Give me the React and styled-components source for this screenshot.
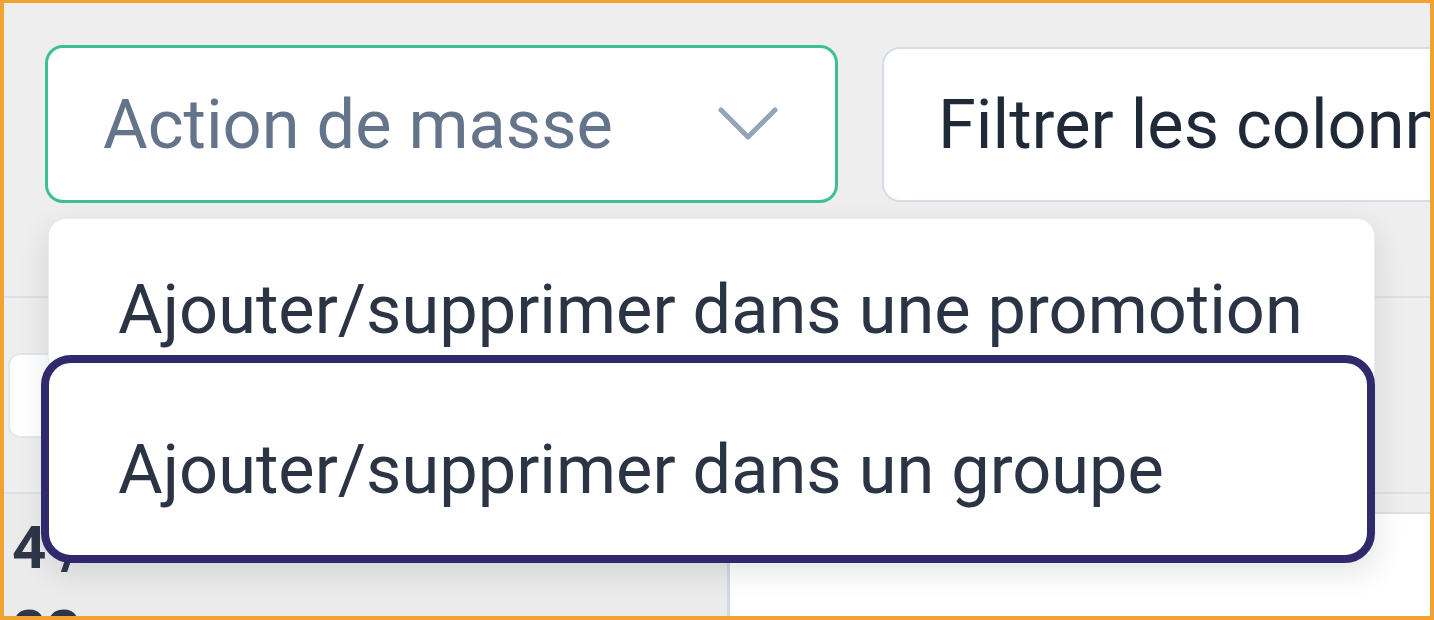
import React from "react";
import styled, { createGlobalStyle } from "styled-components";

const GlobalStyle = createGlobalStyle`
  html, body {
    margin: 0;
    padding: 0;
    background: #ffffff;
  }
  * {
    box-sizing: border-box;
  }
`;

const Frame = styled.div`
  position: relative;
  width: 1434px;
  height: 620px;
  overflow: hidden;
  border: 4px solid #f0a232;
  border-top-width: 3px;
  background: #eeeeee;
  font-family: Roboto, "Liberation Sans", sans-serif;
`;

const Toolbar = styled.div`
  display: flex;
  align-items: center;
  gap: 44px;
  padding: 42px 0 0 41px;
`;

const Select = styled.div`
  flex-shrink: 0;
  display: flex;
  align-items: center;
  justify-content: space-between;
  width: 793px;
  height: 158px;
  padding: 0 56px 0 55px;
  background: #ffffff;
  border: 3px solid #3cc08e;
  border-radius: 18px;
  font-size: 68.5px;
  color: #64748b;
`;

const FilterInput = styled.div`
  flex-shrink: 0;
  display: flex;
  align-items: center;
  width: 700px;
  height: 155px;
  padding-left: 54px;
  background: #ffffff;
  border: 2px solid #d6dde6;
  border-radius: 18px;
  font-size: 68.5px;
  color: #1f2937;
  white-space: nowrap;
`;

const Table = styled.div`
  margin-top: 13px;
`;

const HeadRow = styled.div`
  display: flex;
  align-items: center;
  height: ${(p) => p.h}px;
  border-bottom: 2px solid #dde1e7;
  padding-left: 4px;
`;

const CellInput = styled.div`
  width: 200px;
  height: 85px;
  background: #ffffff;
  border: 2px solid #e2e7ee;
  border-radius: 12px;
`;

const BodyRow = styled.div`
  display: grid;
  grid-template-columns: 726px 1fr;
`;

const LeftCell = styled.div`
  height: 140px;
  padding: 12px 8px;
  background: #ebebeb;
  border-right: 3px solid #d3d9e2;
  font-size: 60px;
  font-weight: 700;
  line-height: 84px;
  color: #2d3748;
`;

const RightCell = styled.div`
  margin-top: 18px;
  background: #ffffff;
  border-top: 2px solid #dde1e7;
`;

const Menu = styled.div`
  position: absolute;
  left: 44px;
  top: 215px;
  width: 1327px;
  padding: 11px 0 8px;
  background: #ffffff;
  border: 1px solid #e8ecf1;
  border-radius: 18px;
  box-shadow: 0 12px 30px rgba(15, 23, 42, 0.12);
`;

const Item = styled.div`
  position: relative;
  height: 160px;
  padding-left: 69px;
  font-size: 68.5px;
  line-height: 160px;
  color: #2b3445;
  white-space: nowrap;

  ${(p) =>
    p.$active &&
    `
    &::after {
      content: "";
      position: absolute;
      top: -35px;
      bottom: -13px;
      left: -8px;
      right: -1px;
      border: 8px solid #30296c;
      border-radius: 30px;
    }
  `}
`;

const Chevron = () => (
  <svg width="62" height="38" viewBox="0 0 62 38" fill="none">
    <polyline
      points="4,5 31,32 58,5"
      stroke="#94a3b8"
      strokeWidth="5"
      strokeLinecap="round"
      strokeLinejoin="round"
    />
  </svg>
);

export default function App() {
  return (
    <>
      <GlobalStyle />
      <Frame>
        <Toolbar>
          <Select>
            <span>Action de masse</span>
            <Chevron />
          </Select>
          <FilterInput>Filtrer les colonnes</FilterInput>
        </Toolbar>
        <Table>
          <HeadRow h={82} />
          <HeadRow h={196}>
            <CellInput />
          </HeadRow>
          <BodyRow>
            <LeftCell>
              4 /
              <br />
              22
            </LeftCell>
            <RightCell />
          </BodyRow>
        </Table>
        <Menu>
          <Item>Ajouter/supprimer dans une promotion</Item>
          <Item $active>Ajouter/supprimer dans un groupe</Item>
        </Menu>
      </Frame>
    </>
  );
}
